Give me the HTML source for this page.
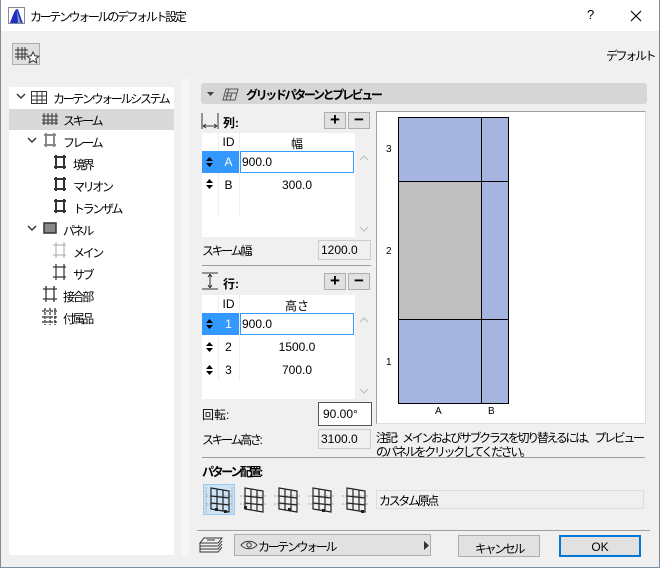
<!DOCTYPE html>
<html><head><meta charset="utf-8"><style>
*{margin:0;padding:0;box-sizing:border-box}
body{width:660px;height:568px;overflow:hidden;background:#f0f0f0;font-family:"Liberation Sans","Noto Sans CJK JP",sans-serif;font-size:12px;color:#000;position:relative}
.a{position:absolute;white-space:nowrap}
.j{letter-spacing:-2.35px}
.b{font-weight:bold}
.hl{position:absolute;height:1px;background:#a0a0a0}
.btn{position:absolute;background:#e1e1e1;border:1px solid #adadad;text-align:center}
.cell{position:absolute;text-align:center}
</style></head><body>
<div class="a" style="left:0;top:0;width:660px;height:568px;border:1px solid #7a8da0;border-top:none"></div>
<div class="a" style="left:1px;top:0;width:658px;height:31px;background:#fff"></div>
<svg class="a" style="left:8px;top:7px" width="17" height="17"><rect x="0.5" y="0.5" width="16" height="16" fill="#fff" stroke="#889"/><path d="M2 16 C5 8 7 2 9 2 C11 2 12 10 15 16Z" fill="#2030c0"/><path d="M9 3 C10 6 11 12 13 16 L10 16Z" fill="#8ab"/></svg>
<div class="a j" style="left:30px;top:8px">カーテンウォールのデフォルト設定</div>
<div class="a" style="left:587px;top:7px;font-size:13px">?</div>
<svg class="a" style="left:630px;top:10px" width="12" height="12"><path d="M1 1L11 11M11 1L1 11" stroke="#000" stroke-width="1.1"/></svg>
<div class="a" style="left:12px;top:43px;width:28px;height:22px;background:#e0e0e0;border:1px solid #adadad"></div>
<svg class="a" style="left:14px;top:45px" width="26" height="20"><path d="M4 2v13M8 2v13M11 2v13M1 5h13M1 9h13M1 12h10" stroke="#333" stroke-width="1"/><path d="M19 7l1.8 3.8 4 .4-3 2.6.9 4-3.7-2.2-3.7 2.2.9-4-3-2.6 4-.4z" fill="#fff" stroke="#333"/></svg>
<div class="a j" style="left:606px;top:47px">デフォルト</div>
<div class="a" style="left:9px;top:87px;width:165px;height:468px;background:#fff"></div>
<div class="a" style="left:182px;top:79px;width:7px;height:476px;background:#f7f7f7"></div>
<div class="a" style="left:9px;top:109px;width:165px;height:21px;background:#d9d9d9"></div>
<svg class="a" style="left:0;top:87px" width="174" height="250" fill="none" stroke="#333">
<path d="M17 7l4 4 4-4M28 51l4 4 4-4M28 139l4 4 4-4" stroke-width="1.4"/>
<rect x="31.5" y="4.5" width="15" height="12"/><path d="M31 9h16M31 13h16M37 4v13M42 4v13"/>
<path d="M44 26v12M48 26v12M52 26v12M56 26v12M42 29h16M42 33h16M42 36h16" stroke-width="1"/>
<path d="M44 48h12M44 58h12M46 46v14M54 46v14" stroke="#888" stroke-width="2"/>
<g stroke-width="2"><path d="M54 70h12M54 80h12M56 68v14M64 68v14"/><path d="M54 92h12M54 102h12M56 90v14M64 90v14"/><path d="M54 114h12M54 124h12M56 112v14M64 112v14"/></g>
<rect x="44" y="136" width="12" height="10" fill="#888" stroke-width="1.5"/>
<path d="M53 158h13M53 168h13M56 155v16M64 155v16" stroke="#aaa"/>
<path d="M53 180h13M53 190h13M56 177v16M64 177v16" stroke-width="1.2"/>
<path d="M43 202h14M43 212h14M46 199v16M54 199v16" stroke-width="1.3"/>
<path d="M42 224h16M42 230h16M42 235h16M45 221v17M50 221v17M55 221v17" stroke-width="1.3" stroke-dasharray="3 1"/>
</svg>
<div class="a j" style="left:53px;top:90px">カーテンウォールシステム</div>
<div class="a j" style="left:63px;top:112px">スキーム</div>
<div class="a j" style="left:63px;top:134px">フレーム</div>
<div class="a j" style="left:73px;top:156px">境界</div>
<div class="a j" style="left:73px;top:178px">マリオン</div>
<div class="a j" style="left:73px;top:200px">トランザム</div>
<div class="a j" style="left:63px;top:222px">パネル</div>
<div class="a j" style="left:73px;top:244px">メイン</div>
<div class="a j" style="left:73px;top:266px">サブ</div>
<div class="a j" style="left:63px;top:288px">接合部</div>
<div class="a j" style="left:63px;top:310px">付属品</div>
<div class="a" style="left:201px;top:83px;width:446px;height:21px;background:#d6d6d6;border-radius:3px"></div>
<svg class="a" style="left:206px;top:88px" width="40" height="14"><path d="M1 4h7l-3.5 4z" fill="#444"/><path d="M20 1h12l-3 11H17z M23 1l-3 11M20 5h11M19 8h6M26 5l-2 7" fill="none" stroke="#555"/></svg>
<div class="a b j" style="left:246px;top:86px">グリッドパターンとプレビュー</div>
<svg class="a" style="left:201px;top:112px" width="20" height="20"><path d="M1 1v16M17 1v16M2 14h14M2 14l3-2M2 14l3 2M16 14l-3-2M16 14l-3 2" fill="none" stroke="#333"/></svg>
<div class="a b" style="left:223px;top:114px">列:</div>
<div class="btn" style="left:324px;top:112px;width:22px;height:17px;font-size:17px;line-height:14px;font-weight:bold">+</div>
<div class="btn" style="left:348px;top:112px;width:22px;height:17px;font-size:17px;line-height:13px;font-weight:bold">−</div>
<div class="a" style="left:202px;top:133px;width:153px;height:104px;background:#fff"></div>
<div class="a" style="left:218px;top:133px;width:1px;height:84px;background:#eee"></div>
<div class="a" style="left:239px;top:133px;width:1px;height:84px;background:#eee"></div>
<div class="cell" style="left:218px;top:135px;width:21px">ID</div>
<div class="cell" style="left:240px;top:135px;width:114px">幅</div>
<div class="a" style="left:202px;top:151px;width:37px;height:22px;background:#3399ff"></div>
<div class="a" style="left:240px;top:151px;width:114px;height:22px;border:1px solid #3399ff;background:#fff"></div>
<svg class="a" style="left:206px;top:157px" width="7" height="10"><path d="M0 4l3.5-4 3.5 4zM0 6l3.5 4 3.5-4z" fill="#000"/></svg>
<div class="cell" style="left:218px;top:155px;width:21px;color:#fff">A</div>
<div class="a" style="left:242px;top:155px">900.0</div>
<svg class="a" style="left:206px;top:179px" width="7" height="10"><path d="M0 4l3.5-4 3.5 4zM0 6l3.5 4 3.5-4z" fill="#000"/></svg>
<div class="cell" style="left:218px;top:178px;width:21px">B</div>
<div class="cell" style="left:240px;top:178px;width:114px">300.0</div>
<svg class="a" style="left:359px;top:155px" width="10" height="80" fill="none" stroke="#bbb"><path d="M1 5l4-4 4 4M1 72l4 4 4-4"/></svg>
<div class="a j" style="left:202px;top:242px">スキーム幅<span style="letter-spacing:0">:</span></div>
<div class="a" style="left:318px;top:240px;width:53px;height:20px;border:1px solid #ccc;background:#f0f0f0;padding:2px 0 0 2px">1200.0</div>
<div class="hl" style="left:202px;top:265px;width:169px"></div>
<svg class="a" style="left:201px;top:272px" width="20" height="20"><path d="M1 1h16M1 17h16M9 2v14M9 2l-2 3M9 2l2 3M9 16l-2-3M9 16l2-3" fill="none" stroke="#333"/></svg>
<div class="a b" style="left:223px;top:275px">行:</div>
<div class="btn" style="left:324px;top:273px;width:22px;height:17px;font-size:17px;line-height:14px;font-weight:bold">+</div>
<div class="btn" style="left:348px;top:273px;width:22px;height:17px;font-size:17px;line-height:13px;font-weight:bold">−</div>
<div class="a" style="left:202px;top:295px;width:153px;height:104px;background:#fff"></div>
<div class="a" style="left:218px;top:295px;width:1px;height:86px;background:#eee"></div>
<div class="a" style="left:239px;top:295px;width:1px;height:86px;background:#eee"></div>
<div class="cell" style="left:218px;top:297px;width:21px">ID</div>
<div class="cell" style="left:240px;top:297px;width:114px">高さ</div>
<div class="a" style="left:202px;top:313px;width:37px;height:22px;background:#3399ff"></div>
<div class="a" style="left:240px;top:313px;width:114px;height:22px;border:1px solid #3399ff;background:#fff"></div>
<svg class="a" style="left:206px;top:319px" width="7" height="10"><path d="M0 4l3.5-4 3.5 4zM0 6l3.5 4 3.5-4z" fill="#000"/></svg>
<div class="cell" style="left:218px;top:317px;width:21px;color:#fff">1</div>
<div class="a" style="left:242px;top:317px">900.0</div>
<svg class="a" style="left:206px;top:342px" width="7" height="10"><path d="M0 4l3.5-4 3.5 4zM0 6l3.5 4 3.5-4z" fill="#000"/></svg>
<div class="cell" style="left:218px;top:340px;width:21px">2</div>
<div class="cell" style="left:240px;top:340px;width:114px">1500.0</div>
<svg class="a" style="left:206px;top:365px" width="7" height="10"><path d="M0 4l3.5-4 3.5 4zM0 6l3.5 4 3.5-4z" fill="#000"/></svg>
<div class="cell" style="left:218px;top:363px;width:21px">3</div>
<div class="cell" style="left:240px;top:363px;width:114px">700.0</div>
<svg class="a" style="left:359px;top:317px" width="10" height="80" fill="none" stroke="#bbb"><path d="M1 5l4-4 4 4M1 72l4 4 4-4"/></svg>
<div class="a" style="left:202px;top:406px">回転:</div>
<div class="a" style="left:318px;top:402px;width:54px;height:24px;border:1px solid #555;background:#fff;padding:4px 0 0 4px">90.00°</div>
<div class="a j" style="left:202px;top:431px">スキーム高さ<span style="letter-spacing:0">:</span></div>
<div class="a" style="left:318px;top:429px;width:53px;height:20px;border:1px solid #ccc;background:#f0f0f0;padding:2px 0 0 2px">3100.0</div>
<div class="a" style="left:376px;top:111px;width:270px;height:313px;background:#fff;border:1px solid #a0a0a0;border-right-color:#ddd;border-bottom-color:#ddd"></div>
<svg class="a" style="left:376px;top:111px" width="270" height="313">
<rect x="22.5" y="6.5" width="110" height="286" fill="#a6b4e0" stroke="#000"/>
<rect x="23" y="70" width="82" height="138" fill="#bfbfbf"/>
<path d="M105.5 6v287M22 70.5h111M22 208.5h111" stroke="#000"/>
<g font-family="Liberation Sans" font-size="10"><text x="10" y="41">3</text><text x="10" y="143">2</text><text x="10" y="254">1</text><text x="59" y="303">A</text><text x="112" y="303">B</text></g>
</svg>
<div class="a j" style="left:376px;top:429px">注記<span style="letter-spacing:0">: </span>メインおよびサブクラスを切り替えるには、プレビュー</div>
<div class="a j" style="left:376px;top:443px">のパネルをクリックしてください。</div>
<div class="hl" style="left:202px;top:457px;width:443px"></div>
<div class="a b j" style="left:202px;top:463px">パターン配置<span style="letter-spacing:0">:</span></div>
<div class="a" style="left:203px;top:484px;width:32px;height:31px;background:#cce4f7;border:1px solid #99c9ef"></div>
<svg class="a" style="left:203px;top:484px" width="170" height="32" fill="none">
<g stroke="#aaa" stroke-dasharray="2 1"><path d="M3 3v26M29 3v26M3 12h27M3 20h27"/><path d="M37 12h27M37 20h27M71 12h27M71 20h27M105 12h27M105 20h27M139 12h27M139 20h27"/></g>
<g stroke="#222" stroke-width="1.2">
<path d="M8 4l18 3v21l-18-3zM14 5v21M20 6v21M8 12l18 2M8 19l18 2"/>
<path d="M42 4l18 3v21l-18-3zM48 5v21M54 6v21M42 12l18 2M42 19l18 2"/>
<path d="M76 4l18 3v21l-18-3zM82 5v21M88 6v21M76 12l18 2M76 19l18 2"/>
<path d="M110 4l18 3v21l-18-3zM116 5v21M122 6v21M110 12l18 2M110 19l18 2"/>
<path d="M144 4l18 3v21l-18-3zM150 5v21M156 6v21M144 12l18 2M144 19l18 2"/>
</g>
<g fill="#222"><rect x="12" y="24" width="3" height="3"/><rect x="21" y="26" width="3" height="3"/><rect x="41" y="22" width="3" height="3"/><rect x="85" y="24" width="3" height="3"/><rect x="119" y="25" width="3" height="3"/><rect x="158" y="26" width="3" height="3"/></g>
</svg>
<div class="a" style="left:376px;top:490px;width:268px;height:19px;border:1px solid #ddd;background:#f0f0f0;padding:1px 0 0 2px"><span class="j">カスタム原点</span></div>
<div class="hl" style="left:197px;top:530px;width:453px"></div>
<svg class="a" style="left:199px;top:537px" width="24" height="16" fill="none" stroke="#333"><path d="M5 1h18l-4 5H1zM1 6v3h18l4-5M1 9v3h18l4-5M1 12v3h18l4-5M8 3h8"/></svg>
<div class="a" style="left:234px;top:534px;width:197px;height:22px;background:#e1e1e1;border:1px solid #adadad"></div>
<svg class="a" style="left:240px;top:540px" width="18" height="10"><path d="M1 5C5 0 13 0 17 5C13 10 5 10 1 5Z" fill="none" stroke="#333"/><circle cx="9" cy="5" r="2.2" fill="none" stroke="#333"/></svg>
<div class="a j" style="left:258px;top:538px">カーテンウォール</div>
<svg class="a" style="left:424px;top:541px" width="6" height="9"><path d="M0 0l5 4.5L0 9z" fill="#333"/></svg>
<div class="btn" style="left:458px;top:535px;width:82px;height:22px;padding-top:4px"><span class="j">キャンセル</span></div>
<div class="btn" style="left:559px;top:535px;width:82px;height:22px;border:2px solid #0078d7;padding-top:3px">OK</div>
</body></html>
